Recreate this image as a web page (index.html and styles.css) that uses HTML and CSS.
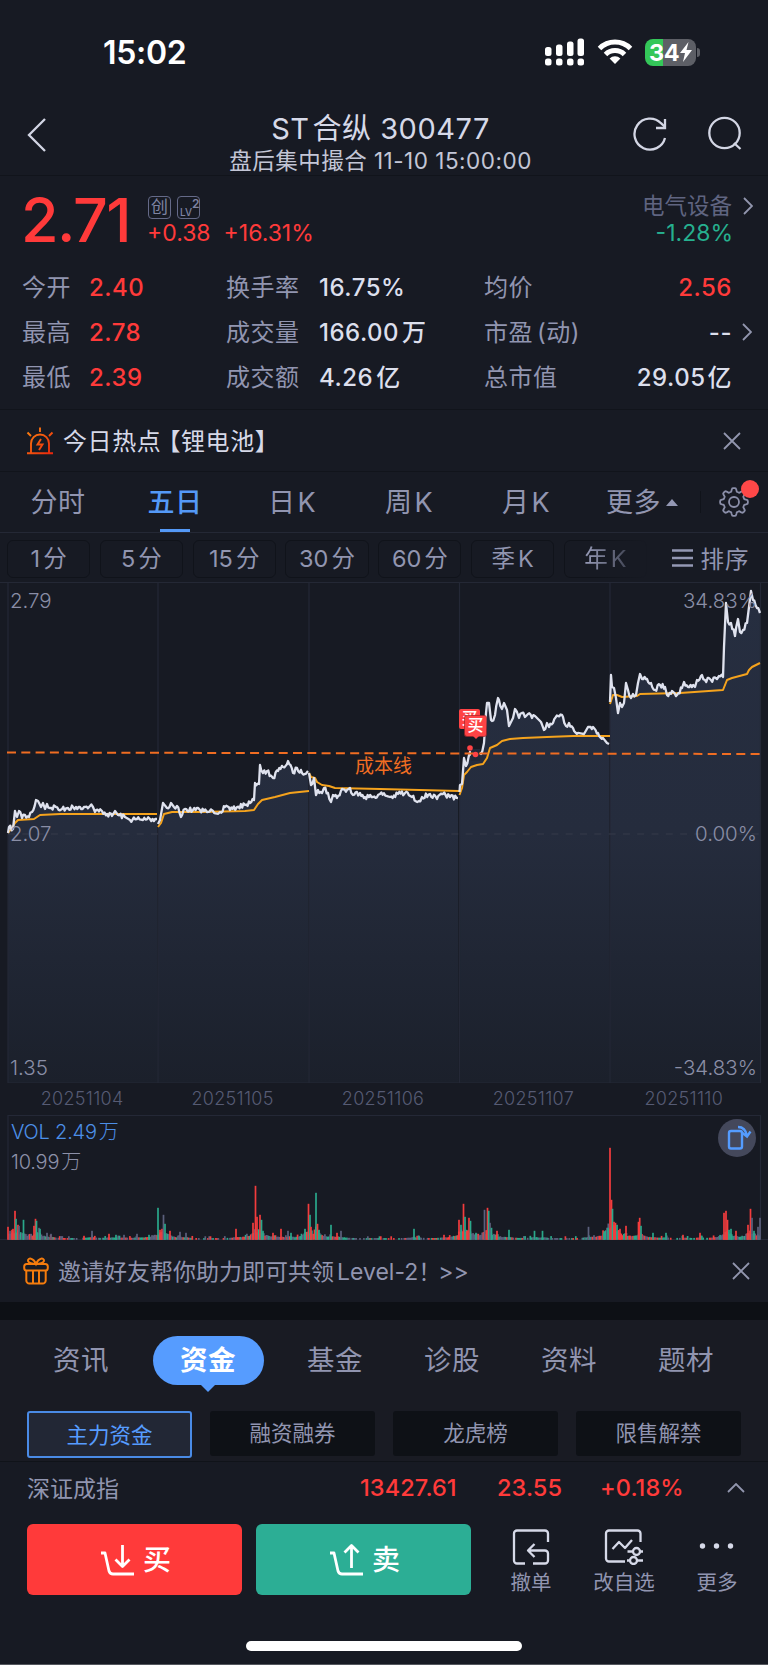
FILE: index.html
```html
<!DOCTYPE html>
<html lang="zh-CN">
<head>
  <meta charset="UTF-8" />
  <meta name="viewport" content="width=device-width, initial-scale=1.0"/>
  <title>ST合纵 300477</title>
  <link rel="stylesheet" href="styles.css">
</head>
<body>

<!-- Status bar -->
<div class="status-bar">
  <span class="clock">15:02</span>
  <div class="status-icons">
    <svg width="40" height="28" viewBox="0 0 40 28" fill="#fff">
      <rect x="0" y="9" width="6.500" height="9" rx="2.5"/><rect x="11" y="6.5" width="6.500" height="11.5" rx="2.5"/>
      <rect x="22" y="3.5" width="6.500" height="14.5" rx="2.5"/><rect x="32.500" y="0.5" width="6.500" height="17.5" rx="2.5"/>
      <rect x="0" y="20.5" width="6.500" height="7" rx="2.5"/><rect x="11" y="20.5" width="6.500" height="7" rx="2.5"/>
      <rect x="22" y="20.5" width="6.500" height="7" rx="2.5"/><rect x="32.500" y="20.5" width="6.500" height="7" rx="2.5"/>
    </svg>
    <svg class="wifi" width="36" height="28" viewBox="0 0 36 28" fill="none" stroke="#fff" stroke-width="5">
      <path d="M2.5 10.5a22 22 0 0 1 31 0"/>
      <path d="M8.5 16.5a13.5 13.5 0 0 1 19 0"/>
      <path d="M18 26l-5.4-5.4a7.6 7.6 0 0 1 10.8 0z" fill="#fff" stroke="none"/>
    </svg>
    <div class="battery">34<svg width="12" height="20" viewBox="0 0 12 20"><path d="M8.5 0L0 11h5L3 20l9-12H6.5z" fill="#fff"/></svg></div>
    <i class="battery-cap"></i>
  </div>
</div>

<!-- Title -->
<header class="title-bar">
  <svg class="back" width="20" height="34" viewBox="0 0 20 34"><path d="M18 1L2 17l16 16"/></svg>
  <div class="title">
    <h1>ST<span>合纵</span> 300477</h1>
    <p>盘后集中撮合 <span>11-10 15:00:00</span></p>
  </div>
  <svg class="refresh" width="36" height="36" viewBox="0 0 36 36"><path d="M33 22A15.5 15.5 0 1 1 29 7.2L33 11"/><path d="M33 3v9h-9"/></svg>
  <svg class="search" width="36" height="36" viewBox="0 0 36 36"><circle cx="17.5" cy="17" r="15.2"/><path d="M27 27l6.5 6"/></svg>
</header>

<!-- Quote -->
<section class="quote">
  <div class="quote-top">
    <div class="price">2.71</div>
    <div class="change">
      <div class="tags"><span class="tag">创</span><span class="tag lv">LV<sup>2</sup></span></div>
      <div class="change-values"><span>+0.38</span><span>+16.31%</span></div>
    </div>
    <div class="sector">
      <div class="sector-name">电气设备</div>
      <div class="sector-change">-1.28%</div>
      <svg class="chevron" width="10" height="18" viewBox="0 0 10 18"><path d="M1 1l8 8-8 8"/></svg>
    </div>
  </div>
  <div class="stats">
    <span>今开</span><b class="up">2.40</b><span>换手率</span><b>16.75%</b><span>均价</span><b class="up last">2.56</b>
    <span>最高</span><b class="up">2.78</b><span>成交量</span><b>166.00<i>万</i></b><span>市盈<em>(动)</em></span><b class="last dash">--<svg class="chevron" width="10" height="18" viewBox="0 0 10 18"><path d="M1 1l8 8-8 8"/></svg></b>
    <span>最低</span><b class="up">2.39</b><span>成交额</span><b>4.26<i>亿</i></b><span>总市值</span><b class="last">29.05<i>亿</i></b>
  </div>
</section>

<!-- Hot topic -->
<section class="hot">
  <svg width="28" height="28" viewBox="0 0 28 28" fill="none" stroke="url(#alarm)" stroke-width="1.9">
    <defs><linearGradient id="alarm" gradientUnits="userSpaceOnUse" x1="0" y1="0" x2="28" y2="28"><stop offset="0" stop-color="#ff8a10"/><stop offset="1" stop-color="#e8200c"/></linearGradient></defs>
    <path d="M1 26.2h26M5 26V16.500a9 9 0 0 1 18 0V26M14 .5v4.500M1.500 5.500l3.500 3.500M26.500 5.500L23 9"/>
    <path d="M15 12l-3.500 5.500h5L13 23"/>
  </svg>
  <span class="hot-text">今日热点<span class="bracket">【</span>锂电池】</span>
  <svg class="close" width="18" height="18" viewBox="0 0 18 18"><path d="M1 1l16 16M17 1L1 17"/></svg>
</section>

<!-- Period tabs -->
<nav class="periods">
  <a>分时</a><a class="active">五日</a><a>日<i>K</i></a><a>周<i>K</i></a><a>月<i>K</i></a>
  <a class="more">更多<svg width="12" height="7" viewBox="0 0 12 7"><path d="M0 7l6-7 6 7z" fill="#9498b4"/></svg></a>
  <div class="settings">
    <svg width="30" height="30" viewBox="0 0 30 30">
      <path id="gear"/>
      <circle cx="15" cy="15" r="5"/>
    </svg>
  </div>
</nav>

<div class="minutes">
  <a>1<i>分</i></a><a>5<i>分</i></a><a>15<i>分</i></a><a>30<i>分</i></a><a>60<i>分</i></a><a>季<i>K</i></a><a class="fade">年<i>K</i></a>
  <div class="sort">
    <svg width="21" height="18" viewBox="0 0 21 18"><path d="M0 1.500h21M0 9h21M0 16.500h21"/></svg>排序
  </div>
</div>

<!-- Five day chart -->
<section class="chart">
  <svg id="priceChart" width="768" height="500" viewBox="0 0 768 500">
    <defs><linearGradient id="area" gradientUnits="userSpaceOnUse" x1="0" y1="0" x2="0" y2="500"><stop offset="0" stop-color="#262e40"/><stop offset=".5" stop-color="#252c3d"/><stop offset="1" stop-color="#1b202b"/></linearGradient></defs>
  </svg>
  <span class="label top-left">2.79</span>
  <span class="label top-right">34.83%</span>
  <span class="label mid-left">2.07</span>
  <span class="label mid-right">0.00%</span>
  <span class="label bottom-left">1.35</span>
  <span class="label bottom-right">-34.83%</span>
  <span class="cost">成本线</span>
  <span class="buy-mark back-mark">买</span>
  <span class="buy-mark">买</span>
</section>
<div class="dates"><span>20251104</span><span>20251105</span><span>20251106</span><span>20251107</span><span>20251110</span></div>

<!-- Volume -->
<section class="volume">
  <svg id="volumeChart" width="768" height="125" viewBox="0 0 768 125"></svg>
  <span class="vol">VOL 2.49<i>万</i></span>
  <span class="vol-max">10.99<i>万</i></span>
  <span class="rotate">
    <svg width="38" height="38" viewBox="0 0 38 38"><rect x="11" y="12" width="13" height="17.500" rx="2"/><path d="M20 8c5 0 8 3.500 9 9M24.500 14l4.500 3.500 3.500-5"/></svg>
  </span>
</section>

<!-- Invite banner -->
<section class="invite">
  <svg width="26" height="28" viewBox="0 0 26 28">
    <rect x="1.200" y="7" width="23.600" height="6.500" rx="2.500"/><path d="M3.300 13.500V23.500a3 3 0 0 0 3 3h13.400a3 3 0 0 0 3-3V13.500M10 14v12M16 14v12M13 7C10 7 5 6 5 3.500S10 0 13 7C16 0 21 1 21 3.500S16 7 13 7"/>
  </svg>
  <span>邀请好友帮你助力即可共领<i>Level-2</i>！<i class="go">&gt;&gt;</i></span>
  <svg class="close" width="18" height="18" viewBox="0 0 18 18"><path d="M1 1l16 16M17 1L1 17"/></svg>
</section>

<!-- Info tabs -->
<nav class="info-tabs">
  <a>资讯</a><a class="active">资金</a><a>基金</a><a>诊股</a><a>资料</a><a>题材</a>
</nav>
<div class="sub-tabs">
  <a class="active">主力资金</a><a>融资融券</a><a>龙虎榜</a><a>限售解禁</a>
</div>

<!-- Index -->
<section class="index-bar">
  <span class="index-name">深证成指</span>
  <b class="index-point">13427.61</b><b class="index-diff">23.55</b><b class="index-rate">+0.18%</b>
  <svg width="18" height="10" viewBox="0 0 18 10"><path d="M1 9l8-8 8 8"/></svg>
</section>

<!-- Actions -->
<footer class="actions">
  <button class="buy"><svg width="36" height="32" viewBox="0 0 36 32"><path d="M1 9h4l4 18q1 3 4 3h21M22.500 1v21M15.500 15.500l7 7 7-7"/></svg>买</button>
  <button class="sell"><svg width="36" height="32" viewBox="0 0 36 32"><path d="M1 9h4l4 18q1 3 4 3h21M22.500 24V2M15.500 8.500l7-7 7 7"/></svg>卖</button>
  <a class="tool tool-cancel">
    <svg width="40" height="36" viewBox="0 0 40 36"><path d="M37 13V4.500a3 3 0 0 0-3-3H6a3 3 0 0 0-3 3v27a3 3 0 0 0 3 3h8M23.500 15L17 21.500l6.500 6.500M18 21.500h16a3 3 0 0 1 3 3v7a3 3 0 0 1-3 3H22"/></svg>
    撤单
  </a>
  <a class="tool tool-watch">
    <svg width="40" height="36" viewBox="0 0 40 36"><path d="M36.500 13V4.500a3 3 0 0 0-3-3H5a3 3 0 0 0-3 3v25a3 3 0 0 0 3 3h16M8.500 20l6.500-7 6 6 7-8M23.500 22.500h5M36 22.500h3M23 31.500h3M33 31.500h6"/><circle cx="32.500" cy="22.500" r="3.500"/><circle cx="29.500" cy="31.500" r="3.500"/></svg>
    改自选
  </a>
  <a class="tool tool-more">
    <svg width="40" height="36" viewBox="0 0 40 36"><g fill="#d6d9e8" stroke="none"><circle cx="5.500" cy="17" r="2.700"/><circle cx="19.500" cy="17" r="2.700"/><circle cx="33.500" cy="17" r="2.700"/></g></svg>
    更多
  </a>
</footer>
<div class="home-indicator"></div>

<script src="chart.js"></script>
</body>
</html>
```
FILE: styles.css
```css
* {
  box-sizing: border-box;
}

body {
  margin: 0;
  width: 768px;
  height: 1665px;
  overflow: hidden;
  background: #171a23;
  color: #9195b0;
  font-family: Inter, "Noto Sans CJK SC", sans-serif;
  border-bottom: 1px solid #54575e;
}

h1, p {
  margin: 0;
  font-weight: 400;
}

i, em, b {
  font-style: normal;
}

svg {
  display: block;
  flex: none;
}

/* Status bar */
.status-bar {
  height: 100px;
  padding: 4px 68px 0 103px;
  display: flex;
  justify-content: space-between;
  align-items: center;
  color: #fff;
}

.clock {
  font-size: 32px;
  font-weight: 600;
  letter-spacing: -0.3px;
}

.status-icons {
  display: flex;
  align-items: center;
}

.wifi {
  margin: 0 12px 0 12px;
}

.battery {
  width: 51px;
  height: 27px;
  padding-left: 4px;
  border-radius: 8px;
  background: linear-gradient(90deg, #34c759 18px, #5d5f66 18px);
  display: flex;
  align-items: center;
  gap: 1px;
  font-size: 23.500px;
  font-weight: 700;
  letter-spacing: -0.5px;
}

.battery-cap {
  width: 3px;
  height: 9px;
  margin-left: 1px;
  border-radius: 0 3px 3px 0;
  background: #5d5f66;
}

/* Title */
.title-bar {
  height: 76px;
  padding: 0 25px 0 27px;
  display: flex;
  align-items: flex-start;
  border-bottom: 1px solid #11141b;
}

.title-bar svg {
  fill: none;
  stroke: #d3d6e4;
  stroke-width: 2.3;
  margin-top: 16px;
}

.title-bar .back {
  margin-top: 18px;
}

.title {
  width: 586px;
  padding-left: 82px;
  text-align: center;
  color: #d6d9e8;
}

.title h1 {
  margin-top: 11px;
  font-size: 29px;
  line-height: 36px;
  letter-spacing: 0.5px;
}

.title h1 span {
  margin-left: 3px;
}

.title p {
  margin-top: -1px;
  font-size: 22.500px;
  line-height: 30px;
  letter-spacing: 0.5px;
  color: #c3c6d6;
}

.refresh {
  margin-right: 39px;
}

/* Quote */
.quote {
  height: 234px;
  border-bottom: 1px solid #11141b;
}

.quote-top {
  height: 89px;
  padding: 0 35px 0 21px;
  display: flex;
  align-items: flex-start;
}

.price {
  width: 126px;
  font-size: 61px;
  line-height: 88px;
  font-weight: 500;
  color: #ff3a3a;
  letter-spacing: -1.5px;
}

.tags {
  margin-top: 20px;
  padding-left: 1px;
  display: flex;
  gap: 6px;
}

.tag {
  width: 23px;
  height: 23px;
  border: 1px solid #656a88;
  border-radius: 4px;
  font-size: 17px;
  line-height: 20px;
  text-align: center;
  color: #7f84a3;
}

.lv {
  display: flex;
  padding-left: 2px;
  font-size: 10px;
  font-weight: 500;
  line-height: 30px;
}

.lv sup {
  font-size: 12px;
  font-weight: 600;
  line-height: 13px;
}

.change-values {
  display: flex;
  gap: 13px;
  font-size: 23px;
  line-height: 28px;
  color: #ff3a3a;
}

.sector {
  position: relative;
  margin-left: auto;
  padding-top: 15px;
  text-align: right;
}

.sector-name {
  margin-right: 1px;
  font-size: 22.500px;
  line-height: 30px;
  color: #5f6480;
}

.sector-change {
  margin-top: -2px;
  font-size: 23px;
  line-height: 28px;
  color: #26b08f;
}

.chevron {
  position: absolute;
  fill: none;
  stroke: #9296ae;
  stroke-width: 1.8;
}

.sector .chevron {
  right: -20px;
  top: 21px;
}

.stats {
  padding-left: 22px;
  display: grid;
  grid-template-columns: 67px 137px 93px 165px 101px 147px;
  grid-auto-rows: 44.800px;
  align-items: center;
  font-size: 24px;
  line-height: 45px;
  letter-spacing: 0.5px;
}

.stats b {
  font-weight: 500;
  color: #dcdfec;
  white-space: nowrap;
}

.stats b i {
  margin-left: 3px;
}

.stats em {
  margin-left: 4px;
}

.stats .up {
  color: #ff3a3a;
}

.stats .last {
  position: relative;
  text-align: right;
}

.stats .last i {
  margin-left: 2px;
}

.stats .chevron {
  right: -20px;
  top: 13px;
}

/* Hot topic */
.hot {
  height: 62px;
  padding: 0 27px 0 26px;
  display: flex;
  align-items: center;
  border-bottom: 1px solid #11141b;
}

.hot-text {
  margin-left: 9px;
  margin-top: -3px;
  font-size: 24px;
  letter-spacing: 0.6px;
  color: #d6d9e8;
  white-space: nowrap;
}

.bracket {
  margin-left: 7px;
  font-feature-settings: "halt";
}

.close {
  margin-left: auto;
  fill: none;
  stroke: #9296ae;
  stroke-width: 1.8;
}

/* Period tabs */
.periods {
  height: 61px;
  display: flex;
  border-bottom: 1px solid #242835;
  font-size: 27px;
  line-height: 61px;
  letter-spacing: 0.5px;
}

.periods a {
  width: 117px;
  padding-right: 1px;
  text-align: center;
}

.periods a i {
  margin-left: 2px;
}

.periods .active {
  position: relative;
  color: #5499f7;
  font-weight: 500;
}

.periods .active::after {
  content: "";
  position: absolute;
  left: 43px;
  bottom: 0;
  width: 30px;
  height: 3px;
  background: #5499f7;
}

.periods .more {
  width: 115px;
  padding-left: 21px;
  display: flex;
  align-items: center;
  gap: 5px;
}

.settings {
  position: relative;
  height: 22px;
  margin-top: 19px;
  padding-left: 18px;
  border-left: 1px solid #10131a;
}

.settings svg {
  margin-top: -4px;
  fill: none;
  stroke: #8b8fa9;
  stroke-width: 1.8;
}

.settings::after {
  content: "";
  position: absolute;
  left: 40px;
  top: -11px;
  width: 18px;
  height: 18px;
  border-radius: 50%;
  background: #ff4848;
}

.minutes {
  height: 50px;
  padding: 7px 0 0 7px;
  display: flex;
  gap: 9.500px;
  border-bottom: 1px solid #242835;
  font-size: 23.500px;
}

.minutes a {
  width: 83.300px;
  height: 38px;
  border: 1px solid #10131a;
  border-radius: 6px;
  line-height: 35px;
  text-align: center;
}

.minutes a i {
  margin-left: 3px;
}

.minutes .fade {
  -webkit-mask-image: linear-gradient(90deg, #000 30%, rgba(0, 0, 0, 0.6) 60%, transparent);
  mask-image: linear-gradient(90deg, #000 30%, rgba(0, 0, 0, 0.6) 60%, transparent);
}

.sort {
  margin-left: 15px;
  display: flex;
  align-items: center;
  gap: 8px;
  height: 36px;
  letter-spacing: 0.8px;
}

.sort svg {
  stroke: #9498b4;
  stroke-width: 2.6;
}

/* Chart */
.chart {
  position: relative;
  height: 500px;
}

.chart .area {
  fill: url(#area);
}

.chart .price-line {
  fill: none;
  stroke: #dfe2ee;
  stroke-width: 2.3;
  stroke-linejoin: round;
}

.chart .avg-line {
  fill: none;
  stroke: #f5a31d;
  stroke-width: 2;
  stroke-linejoin: round;
}

.grid-line {
  stroke: #242836;
  stroke-width: 1.2;
}

.zero-line {
  stroke: #363b4b;
  stroke-dasharray: 7 7.300;
}

.cost-line {
  stroke: #f06d22;
  stroke-width: 2;
  stroke-dasharray: 9 5.300;
}

.label {
  position: absolute;
  font-size: 20.500px;
  font-weight: 300;
  line-height: 20px;
  color: #8a8ea6;
}

.top-left, .mid-left, .bottom-left {
  left: 10px;
}

.top-right, .mid-right, .bottom-right {
  right: 11px;
}

.top-left, .top-right {
  top: 8px;
}

.mid-left, .mid-right {
  top: 241px;
}

.bottom-left, .bottom-right {
  top: 475px;
}

.cost {
  position: absolute;
  left: 355px;
  top: 170px;
  font-size: 19px;
  line-height: 28px;
  color: #f06d22;
}

.buy-mark {
  position: absolute;
  left: 465px;
  top: 133px;
  width: 21px;
  height: 20px;
  border-radius: 2px;
  background: #ff4345;
  box-shadow: 0 0 0 1px rgba(170, 40, 45, 0.8);
  color: #fff;
  font-size: 16px;
  font-weight: 500;
  line-height: 19px;
  text-align: center;
}

.buy-mark::after {
  content: "";
  position: absolute;
  left: 7px;
  top: 19px;
  border: 4px solid transparent;
  border-top-color: #ff4345;
}

.back-mark {
  left: 459px;
  top: 126px;
  box-shadow: none;
}

.back-mark::after {
  display: none;
}

.dates {
  height: 32px;
  padding: 0 9px 2px 7px;
  display: grid;
  grid-template-columns: repeat(5, 1fr);
  align-items: center;
  text-align: center;
  font-size: 18px;
  font-weight: 300;
  letter-spacing: 0.3px;
  color: #565b74;
}

/* Volume */
.volume {
  position: relative;
  height: 125px;
}

.vol, .vol-max {
  position: absolute;
  left: 11px;
  top: 6px;
  font-size: 20px;
  font-weight: 300;
  line-height: 22px;
  letter-spacing: -0.2px;
  color: #4c8fe8;
}

.vol i, .vol-max i {
  margin-left: 2px;
}

.vol-max {
  top: 36px;
  color: #8d91a9;
}

.rotate {
  position: absolute;
  left: 718px;
  top: 4px;
  width: 38px;
  height: 38px;
  border-radius: 50%;
  background: #44485b;
}

.rotate svg {
  fill: none;
  stroke: #549cff;
  stroke-width: 2.4;
}

/* Invite */
.invite {
  height: 80px;
  padding: 0 18px 18px 23px;
  display: flex;
  align-items: center;
  background: linear-gradient(#171a23 62px, #0d1015 62px);
  font-size: 23px;
  white-space: nowrap;
}

.invite svg {
  fill: none;
  stroke: #f57c0d;
  stroke-width: 2;
}

.invite > span {
  margin: -2px 0 0 9px;
}

.invite i {
  margin-left: 3px;
}

.invite .go {
  margin-left: -3px;
}

.invite .close {
  stroke: #9296ae;
  stroke-width: 1.8;
}

/* Info tabs */
.info-tabs {
  height: 91px;
  padding: 16px 0 0 23px;
  display: flex;
  background: #191b23;
  font-size: 27.500px;
  line-height: 49px;
  letter-spacing: 0.5px;
}

.info-tabs a {
  width: 117px;
  padding-right: 1px;
  text-align: center;
}

.info-tabs .active {
  position: relative;
  width: 111px;
  height: 49px;
  margin: 0 13px;
  border-radius: 25px;
  background: #569cff;
  color: #fff;
  font-weight: 700;
}

.info-tabs .active::after {
  content: "";
  position: absolute;
  left: 47px;
  top: 48px;
  border: 8px solid transparent;
  border-top-color: #569cff;
}

.sub-tabs {
  height: 51px;
  padding: 0 27px;
  display: flex;
  gap: 18px;
  background: #191b23;
  border-bottom: 1px solid #101319;
  font-size: 21.500px;
}

.sub-tabs a {
  width: 165px;
  height: 45px;
  border-radius: 3px;
  background: #0e1116;
  line-height: 45px;
  text-align: center;
}

.sub-tabs .active {
  height: 47px;
  border: 2px solid #4a8be6;
  background: #222735;
  color: #569cff;
}

/* Index bar */
.index-bar {
  height: 51px;
  padding: 0 0 2px 27px;
  display: flex;
  align-items: center;
  font-size: 23px;
}

.index-bar b {
  padding-top: 2px;
  font-size: 23.500px;
  font-weight: 500;
  letter-spacing: 0.1px;
  color: #ff3a3a;
}

.index-name {
  width: 333px;
}

.index-point {
  width: 137px;
}

.index-diff {
  width: 103px;
}

.index-rate {
  width: 127px;
}

.index-bar svg {
  margin-top: 2px;
  fill: none;
  stroke: #9296ae;
  stroke-width: 1.8;
}

/* Actions */
.actions {
  height: 128px;
  padding: 11px 0 0 27px;
  display: flex;
  align-items: flex-start;
}

.actions button {
  width: 215px;
  height: 71px;
  margin-right: 14px;
  padding: 0 0 0 2px;
  border: 0;
  border-radius: 6px;
  display: flex;
  align-items: center;
  justify-content: center;
  gap: 7px;
  color: #fff;
  font: 500 28px/60px Inter, "Noto Sans CJK SC", sans-serif;
}

.buy {
  background: #ff3a3a;
}

.sell {
  background: #2cae95;
}

.actions svg {
  fill: none;
  stroke: #d6d9e8;
  stroke-width: 2.3;
  stroke-linejoin: round;
}

.actions button svg {
  stroke: #fff;
  stroke-width: 2.8;
}

.tool {
  display: flex;
  flex-direction: column;
  align-items: center;
  gap: 3px;
  padding: 5px 0 0 1px;
  font-size: 20.500px;
  line-height: 30px;
}

.tool-cancel {
  width: 91px;
}

.tool-watch {
  width: 95px;
}

.tool-more {
  width: 91px;
}

.home-indicator {
  width: 276px;
  height: 10px;
  margin: 0 246px;
  border-radius: 5px;
  background: #fff;
}
```
FILE: chart.js
```js
const NS = 'http://www.w3.org/2000/svg';
const priceChart = document.getElementById('priceChart');
const volumeChart = document.getElementById('volumeChart');
const bounds = [8, 158, 309, 459.5, 610, 760.5];

// fixed seed so the small ticks stay the same on every load
let seed = 7;
function rand() {
  seed = (seed * 16807) % 2147483647;
  return seed / 2147483647;
}

function add(parent, name, attrs) {
  const el = document.createElementNS(NS, name);
  for (const key in attrs) el.setAttribute(key, attrs[key]);
  parent.appendChild(el);
}

function line(parent, x1, y1, x2, y2, cls) {
  add(parent, 'line', { x1, y1, x2, y2, class: cls });
}

const prices = [
  '8,250 9,244 13,246 15,228 17,234 19,228 22,235 25,232 29,234 32,229 36,217 38,218 41,224 43,220 45,226 47,221 50,225 56,224 62,226 68,225 76,224 84,224 90,223 93,224 95,229 102,228 107,231 112,233 115,228 118,232 125,234 130,237 137,236 143,237 150,236 157,236',
  '158,241 160,237 163,220 167,225 171,220 174,224 177,223 181,234 185,226 193,227 200,227 207,229 213,228 220,229 225,224 230,227 237,224 245,222 250,220 254,217 255,200 259,201 260,182 263,190 267,188 273,195 278,188 283,184 288,178 293,190 297,185 302,190 308,188',
  '309,190 311,202 314,195 316,212 318,207 322,210 324,205 328,210 331,219 333,212 337,215 342,206 347,207 350,205 353,212 360,210 365,214 373,214 380,211 390,214 398,211 405,210 412,214 419,218 422,214 430,211 437,216 443,211 450,214 458,215',
  '459.5,209 460,202 462,201 464,175 466,183 470,169 471,171 481,171 484,160 486,130 487,120 489,120 491,137 492,138 495,132 498,115 499,117 502,126 504,120 507,127 509,143 511,139 513,135 515,126 517,129 519,135 522,130 525,134 528,131 532,135 535,133 538,136 541,139 544,147 547,140 549,144 553,140 558,133 563,134 566,143 569,140 573,145 578,150 584,151 588,144 593,144 598,150 603,155 607,160 609,161',
  '610,119 611,92 612,104 614,105 616,115 618,130 620,120 622,124 624,120 626,100 628,107 631,115 633,111 636,112 638,100 640,91 642,96 647,96 651,100 655,107 660,102 665,104 667,112 672,108 677,112 682,105 684,99 688,104 695,104 697,97 702,92 705,97 711,97 717,96 719,93 723,94 724,64 726,20 728,39 731,40 735,53 738,36 740,49 743,47 747,40 749,24 751,8 753,17 757,25 760,30'
];

const averages = [
  '8,250 12,245 15,240 18,237 34,236 40,232 60,231 157,231',
  '158,244 161,240 164,231 172,229 200,229 245,228 254,227 258,221 262,217 275,214 290,210 309,208',
  '309,190 311,194 315,195 317,199 322,202 329,203 335,205 380,206 459,208',
  '459.5,212 462,205 464,192 467,189 471,184 477,182 483,181 487,175 490,165 497,162 502,158 510,156 523,155 547,154 573,153 610,153',
  '610,121 613,112 617,112 622,114 637,113 640,111 680,110 723,107 727,97 732,95 747,91 749,87 752,84 760,80'
];

function expand(text) {
  const pts = text.split(' ').map(p => p.split(',').map(Number));
  const out = [pts[0]];
  for (let i = 1; i < pts.length; i++) {
    const [ax, ay] = pts[i - 1];
    const [bx, by] = pts[i];
    for (let x = ax + 1.3; x < bx - 1; x += 1.3) {
      const k = (x - ax) / (bx - ax);
      const tick = Math.floor(rand() * 3) - 1;
      out.push([x, ay + (by - ay) * k + tick * 2]);
    }
    out.push(pts[i]);
  }
  return out;
}

const days = prices.map(expand);
days.forEach(pts => {
  const first = pts[0][0];
  const last = pts[pts.length - 1][0] + 0.8;
  add(priceChart, 'polygon', { class: 'area', points: `${first},500 ${pts.join(' ')} ${last},500` });
});

bounds.forEach(x => line(priceChart, x, 0, x, 500, 'grid-line'));
line(priceChart, 8, 500, 760, 500, 'grid-line');
line(priceChart, 8, 251, 760, 251, 'zero-line');
averages.forEach(points => add(priceChart, 'polyline', { class: 'avg-line', points }));
days.forEach(pts => add(priceChart, 'polyline', { class: 'price-line', points: pts.join(' ') }));
add(priceChart, 'rect', { x: 471, y: 166, width: 9, height: 12, fill: '#222838' });
line(priceChart, 7, 169.5, 760, 171, 'cost-line');
add(priceChart, 'circle', { cx: 470, cy: 165, r: 2.8, fill: '#ff4345' });
add(priceChart, 'circle', { cx: 475.5, cy: 171.5, r: 2.8, fill: '#ff4345' });

// volume: x, height, colour
const R = '#f23c3d', G = '#2aa88a', N = '#5c607d';
const spikes = [
  [8, 13, R], [10, 9, N], [12, 10, R], [13, 11, R], [15, 29, R], [16, 21, G], [18, 15, R], [19, 14, N], [23.5, 20, G], [34, 14, R], [35.5, 21, R], [36.5, 19, G], [39, 12, N], [40, 11, G], [47, 7, N], [51, 6, N], [84, 4, R], [92, 9, N], [109, 6, R], [116, 5, G], [124, 5, N], [137, 6, N], [149, 5, G],
  [158, 32, G], [160, 10, R], [162, 11, R], [163.5, 25, N], [165, 16, G], [170, 9, R], [180, 8, N], [186, 7, N], [236, 11, R], [253, 17, R], [255.5, 54, R], [257, 23, R], [260, 25, R], [261.5, 20, G], [263, 9, G], [273, 7, R], [281, 11, R], [288, 9, N], [291, 7, G], [305, 11, G],
  [308.5, 36, R], [310, 25, G], [311, 13, R], [316, 47, G], [317.5, 16, R], [319, 10, G], [331, 15, G], [337, 7, R], [341, 9, N], [414, 11, G], [419, 4, G], [444, 5, R],
  [459, 20, R], [461, 15, G], [463.5, 36, R], [465, 23, G], [467, 9, R], [469, 22, R], [470.5, 19, G], [476, 7, G], [484.5, 30, N], [487.5, 32, R], [488.7, 29, G], [490, 17, N], [491.5, 12, G], [497, 9, R], [509, 10, G], [534.5, 9, G], [542.5, 9, G], [588.5, 13, N], [604, 7, G], [608, 12, G],
  [610, 92, R], [611.5, 40, R], [612.5, 31, G], [614, 18, R], [615.5, 17, R], [617, 15, G], [620, 11, R], [626, 14, R], [638.5, 18, R], [639.7, 22, R], [641, 14, G], [653, 7, G], [666, 7, G], [683, 5, R], [700, 7, R], [724, 27, R], [726, 29, R], [727.5, 20, R], [729, 10, G], [731, 11, G], [736, 9, R], [748, 15, R], [750.5, 31, R], [752, 22, N], [754, 9, G], [758, 13, N], [760, 22, N]
];

line(volumeChart, 8, 0.5, 760.5, 0.5, 'grid-line');
line(volumeChart, 8, 0, 8, 125, 'grid-line');
line(volumeChart, 760.5, 0, 760.5, 125, 'grid-line');
line(volumeChart, 0, 124.5, 768, 124.5, 'grid-line');

function bar(x, h, fill) {
  add(volumeChart, 'rect', { x: x - 0.85, y: 124.8 - h, width: 1.7, height: h, fill });
}

for (let x = 9; x < 760; x += 1.3) {
  const near = spikes.reduce((s, p) => s + p[1] * Math.exp(-Math.abs(x - p[0]) / 5) * 0.09, 0);
  const pick = rand();
  const h = 1.7 + near * (0.6 + rand() * 0.7) + (rand() > 0.85 ? 1.8 : 0);
  if (near < 0.4 && rand() < 0.4) continue;
  bar(x, h, pick < 0.3 ? R : pick < 0.6 ? G : N);
}
spikes.forEach(s => bar(...s));

// gear outline with eight teeth
const gear = [];
for (let i = 0; i <= 96; i++) {
  const a = i / 96 * Math.PI * 2;
  const r = 12.2 + 1.7 * Math.tanh(2.5 * Math.cos(a * 8));
  gear.push((15 + r * Math.sin(a)).toFixed(2) + ' ' + (15 - r * Math.cos(a)).toFixed(2));
}
document.getElementById('gear').setAttribute('d', 'M' + gear.join('L') + 'Z');
```
